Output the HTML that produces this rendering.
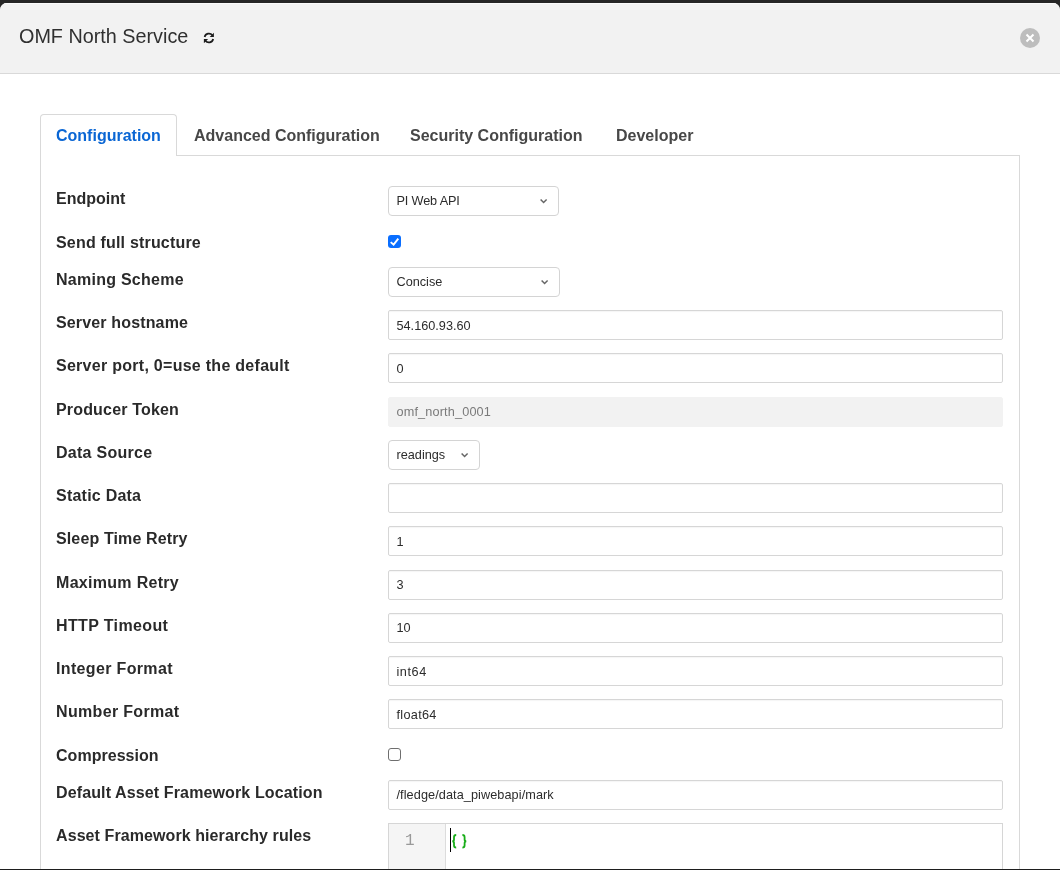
<!DOCTYPE html>
<html><head><meta charset="utf-8"><style>
html,body{margin:0;padding:0;}
body{-webkit-font-smoothing:antialiased;width:1060px;height:870px;position:relative;overflow:hidden;background:#262626;font-family:"Liberation Sans",sans-serif;}
.modal{position:absolute;left:0;top:3px;width:1060px;height:866px;background:#fff;border-radius:7px 7px 0 0;overflow:hidden;}
.head{position:absolute;left:0;top:0;width:1060px;height:70px;background:#f2f2f2;border-bottom:1px solid #d9d9d9;box-shadow:inset 0 1px 0 #fbfbfb;}
.title{will-change:transform;position:absolute;left:19px;top:21px;font-size:19.8px;line-height:24px;color:#303030;white-space:nowrap;}
.refresh{position:absolute;left:203px;top:28px;}
.close{position:absolute;left:1020px;top:24.5px;width:20px;height:20px;border-radius:50%;background:#bdbdbd;}
.tab{position:absolute;left:40px;top:114px;width:135px;height:41px;border:1px solid #d9d9d9;border-bottom:none;border-radius:4px 4px 0 0;background:#fff;}
.panel{position:absolute;left:40px;top:155px;width:978px;height:800px;border:1px solid #d9d9d9;border-top:none;}
.panelTop{position:absolute;left:176px;top:155px;width:843px;height:1px;background:#d9d9d9;}
.tt{position:absolute;top:126px;font-size:16px;line-height:20px;font-weight:bold;color:#474747;white-space:nowrap;}
.lab{position:absolute;left:56px;font-size:16px;line-height:20px;font-weight:bold;color:#2a2a2a;white-space:nowrap;}
.sel{position:absolute;left:388px;height:30px;box-sizing:border-box;border:1px solid #d4d4d4;border-radius:4px;background:#fff;}
.sv{position:absolute;left:7.5px;top:7px;font-size:12.7px;line-height:15px;color:#2c2c2c;white-space:nowrap;}
.chev{position:absolute;top:11px;}
.inp{position:absolute;left:388px;width:613px;height:28px;border:1px solid #d6d6d6;border-radius:2px;background:#fff;box-shadow:inset 0 1px 1px rgba(10,10,10,.04);}
.inp.dis{background:#f2f2f2;border-color:#f2f2f2;box-shadow:none;}
.inp.dis .iv{color:#7a7a7a;}
.iv{position:absolute;left:7.5px;top:8px;font-size:12.7px;line-height:15px;color:#2c2c2c;white-space:nowrap;}
.cb{position:absolute;left:388px;width:13px;height:13px;box-sizing:border-box;border-radius:3px;}
.cb.on{background:#0a6eff;}
.cb.on svg{position:absolute;left:0;top:0;}
.cb.off{border:1px solid #6e6e6e;background:#fff;}
.code{position:absolute;left:388px;width:613px;height:100px;border:1px solid #d6d6d6;background:#fff;}
.gut{position:absolute;left:0;top:0;width:56px;height:100px;background:#f5f5f5;border-right:1px solid #dcdcdc;}
.ln{position:absolute;left:16px;top:9px;font-family:"Liberation Mono",monospace;font-size:16px;line-height:16px;color:#999;}
.cur{position:absolute;left:61px;top:4px;width:1px;height:24px;background:#000;}
.br{position:absolute;left:62px;top:10px;}
</style></head><body>
<div class="modal">
 <div class="head">
  <div class="title">OMF North Service</div>
  <svg class="refresh" width="13" height="14" viewBox="0 0 13 14"><path d="M1.61 6 A4.4 4.4 0 0 1 9.4 4.3" fill="none" stroke="#1c1c1c" stroke-width="1.7"/><path d="M10.9 1.7 L10.9 5.9 L6.7 5.9 Z" fill="#1c1c1c"/><path d="M10.19 8 A4.4 4.4 0 0 1 2.4 9.7" fill="none" stroke="#1c1c1c" stroke-width="1.7"/><path d="M0.9 12.3 L0.9 8.1 L5.1 8.1 Z" fill="#1c1c1c"/></svg>
  <div class="close"><svg width="20" height="20" viewBox="0 0 20 20"><path d="M6.5 6.5 L13.5 13.5 M13.5 6.5 L6.5 13.5" stroke="#fff" stroke-width="2"/></svg></div>
 </div>
</div>
<div style="position:absolute;left:0;top:0;width:1060px;height:870px;will-change:transform">
 <div class="tab"></div>
 <div class="panel"></div>
 <div class="panelTop"></div>
 <div class="tt" style="left:56px;color:#0a66d4">Configuration</div>
 <div class="tt" style="left:194px">Advanced Configuration</div>
 <div class="tt" style="left:410px">Security Configuration</div>
 <div class="tt" style="left:616px">Developer</div>
 <div class="lab" style="top:189px;letter-spacing:-0.014px">Endpoint</div><div class="sel" style="top:186px;width:171px"><span class="sv" style="top:7px;letter-spacing:-0.15px">PI Web API</span><svg class="chev" style="left:150px" width="9" height="7" viewBox="0 0 9 7"><path d="M1.6 1.5 L4.6 4.5 L7.6 1.5" fill="none" stroke="#666" stroke-width="1.5"/></svg></div><div class="lab" style="top:233px;letter-spacing:0.189px">Send full structure</div><div class="cb on" style="top:235px"><svg width="13" height="13" viewBox="0 0 13 13"><path d="M2.7 7.1 L5.6 9.7 L10.3 3.6" fill="none" stroke="#fff" stroke-width="1.9" stroke-linecap="butt" stroke-linejoin="miter"/></svg></div><div class="lab" style="top:270px;letter-spacing:0.258px">Naming Scheme</div><div class="sel" style="top:267px;width:172px"><span class="sv" style="top:7px;letter-spacing:0px">Concise</span><svg class="chev" style="left:151px" width="9" height="7" viewBox="0 0 9 7"><path d="M1.6 1.5 L4.6 4.5 L7.6 1.5" fill="none" stroke="#666" stroke-width="1.5"/></svg></div><div class="lab" style="top:313px;letter-spacing:0.150px">Server hostname</div><div class="inp" style="top:310px"><span class="iv" style="top:8px;letter-spacing:0px">54.160.93.60</span></div><div class="lab" style="top:356px;letter-spacing:0.276px">Server port, 0=use the default</div><div class="inp" style="top:353px"><span class="iv" style="top:8px;letter-spacing:0px">0</span></div><div class="lab" style="top:400px;letter-spacing:0.169px">Producer Token</div><div class="inp dis" style="top:397px"><span class="iv" style="top:7px;letter-spacing:0.15px">omf_north_0001</span></div><div class="lab" style="top:443px;letter-spacing:0.270px">Data Source</div><div class="sel" style="top:440px;width:92px"><span class="sv" style="top:7px;letter-spacing:0.0px">readings</span><svg class="chev" style="left:71px" width="9" height="7" viewBox="0 0 9 7"><path d="M1.6 1.5 L4.6 4.5 L7.6 1.5" fill="none" stroke="#666" stroke-width="1.5"/></svg></div><div class="lab" style="top:486px;letter-spacing:0.230px">Static Data</div><div class="inp" style="top:483px"><span class="iv" style="top:8px;letter-spacing:0px"></span></div><div class="lab" style="top:529px;letter-spacing:0.127px">Sleep Time Retry</div><div class="inp" style="top:526px"><span class="iv" style="top:8px;letter-spacing:0px">1</span></div><div class="lab" style="top:573px;letter-spacing:0.300px">Maximum Retry</div><div class="inp" style="top:570px"><span class="iv" style="top:7px;letter-spacing:0px">3</span></div><div class="lab" style="top:616px;letter-spacing:0.364px">HTTP Timeout</div><div class="inp" style="top:613px"><span class="iv" style="top:7px;letter-spacing:0px">10</span></div><div class="lab" style="top:659px;letter-spacing:0.346px">Integer Format</div><div class="inp" style="top:656px"><span class="iv" style="top:8px;letter-spacing:0.55px">int64</span></div><div class="lab" style="top:702px;letter-spacing:0.333px">Number Format</div><div class="inp" style="top:699px"><span class="iv" style="top:8px;letter-spacing:0.3px">float64</span></div><div class="lab" style="top:746px;letter-spacing:0.030px">Compression</div><div class="cb off" style="top:748px"></div><div class="lab" style="top:783px;letter-spacing:0.126px">Default Asset Framework Location</div><div class="inp" style="top:780px"><span class="iv" style="top:7px;letter-spacing:0.08px">/fledge/data_piwebapi/mark</span></div><div class="lab" style="top:826px;letter-spacing:0.087px">Asset Framework hierarchy rules</div><div class="code" style="top:823px"><div class="gut"><span class="ln">1</span></div><div class="cur"></div><svg class="br" width="18" height="15" viewBox="0 0 18 15"><path d="M5.2 1.0 Q3.0 1.0 3.0 3.3 L3.0 5.6 Q3.0 7.3 1.3 7.3 Q3.0 7.3 3.0 9.0 L3.0 11.3 Q3.0 13.6 5.2 13.6" fill="none" stroke="#18ad18" stroke-width="1.8"/><path d="M11.4 1.0 Q13.6 1.0 13.6 3.3 L13.6 5.6 Q13.6 7.3 15.3 7.3 Q13.6 7.3 13.6 9.0 L13.6 11.3 Q13.6 13.6 11.4 13.6" fill="none" stroke="#18ad18" stroke-width="1.8"/></svg></div>
</div>
<div style="position:absolute;left:0;top:869px;width:1060px;height:1px;background:#1e1e1e;"></div>
</body></html>
